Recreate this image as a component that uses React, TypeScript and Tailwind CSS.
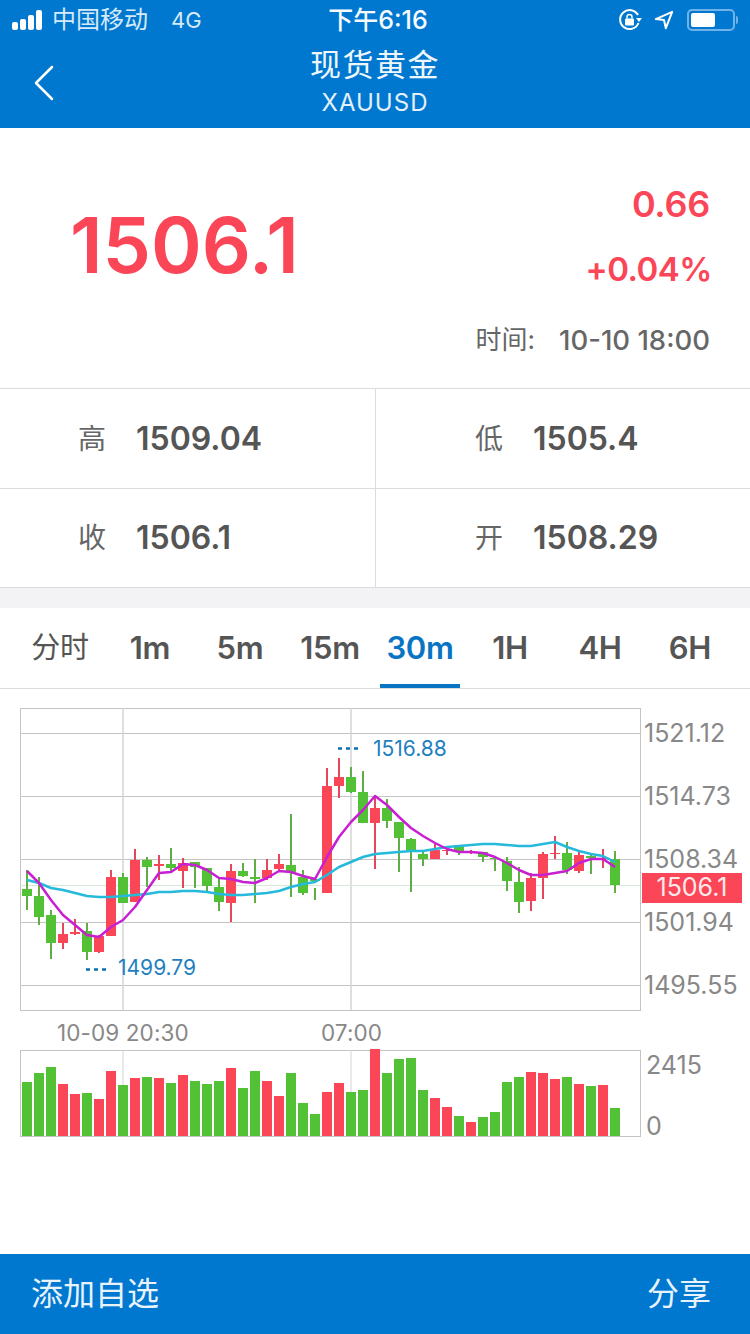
const CJK = 'Inter, "Noto Sans CJK SC", sans-serif';
type C = [number, number, number, number, number];
// [green=0/red=1, wickTop, wickBottom, bodyTop, bodyBottom]
const candles: C[] = [
  [0,870,910,889,896],[0,877,925,896,917],[0,910,959,915,943],[1,923,949,934,943],[1,919,935,932,934],
  [0,923,960,931,952],[1,935,953,936,952],[1,870,936,877,936],[0,873,903,877,903],[1,849,902,860,902],
  [0,857,887,860,867],[1,855,880,864,866],[0,848,873,864,868],[1,858,888,863,871],[0,862,888,862,867],
  [0,868,893,868,886],[0,878,911,887,902],[1,864,922,871,903],[0,863,877,871,876],[0,859,903,877,879],
  [1,859,880,870,878],[1,854,870,864,869],[0,814,897,865,872],[0,870,895,877,893],[0,888,900,879,881],
  [1,768,893,786,893],[1,758,798,777,786],[0,767,793,777,792],[0,771,823,792,823],[1,795,869,808,823],
  [0,799,828,808,821],[0,822,872,822,838],[0,838,892,839,852],[0,851,866,854,859],[1,844,859,850,859],
  [1,846,855,850,851],[0,847,855,847,852],[1,850,854,852,853],[0,852,862,852,857],[0,858,871,858,859],
  [0,857,891,861,881],[0,867,913,882,902],[1,873,911,878,901],[1,852,899,854,878],[1,836,859,853,854],
  [0,842,874,853,870],[1,851,873,855,871],[0,855,874,856,858],[1,849,868,858,859],[0,851,893,859,885],
];
const magenta = [871,883,900,915,925,935,937,927,920,907,890,873,872,864,865,870,878,879,882,883,878,871,872,876,879,857,837,822,810,796,805,817,828,836,843,849,852,852,853,857,863,870,875,875,873,871,863,859,859,867];
const cyan = [880,883,888,890,893,896,897,897,896,895,894,892,892,891,891,892,894,895,895,894,893,891,887,884,882,875,867,862,857,854,853,852,851,851,849,847,846,845,844,844,845,846,846,844,842,847,851,854,856,862];
const vols: [number, number][] = [
  [0,1082],[0,1073],[0,1067],[1,1084],[1,1094],[0,1093],[1,1099],[1,1071],[0,1085],[1,1078],
  [0,1077],[1,1078],[0,1083],[1,1075],[0,1081],[0,1084],[0,1081],[1,1068],[0,1088],[0,1071],
  [1,1081],[1,1096],[0,1073],[0,1103],[0,1114],[1,1092],[1,1083],[0,1092],[0,1090],[1,1049],
  [0,1073],[0,1059],[0,1058],[0,1090],[1,1098],[1,1107],[0,1116],[1,1122],[0,1117],[0,1112],
  [0,1082],[0,1077],[1,1072],[1,1073],[1,1079],[0,1077],[1,1084],[0,1086],[1,1085],[0,1108],
];
const RED = '#fb4658';
const GREEN = '#52c136';
const xAt = (i: number) => 27 + 12 * i;
const pts = (a: number[]) => a.map((y, i) => `${xAt(i)},${y}`).join(' ');

function Cell({ label, value, left }: { label: string; value: string; left?: boolean }) {
  return (
    <div className={`flex items-center ${left ? 'w-[376px] border-r border-[#dcdcdc] pl-[78px]' : 'w-[374px] pl-[99px]'}`}>
      <span className="w-[58px] text-[28px] text-[#666]">{label}</span>
      <span className="text-[32px] font-semibold text-[#555]">{value}</span>
    </div>
  );
}

const tabs = ['分时', '1m', '5m', '15m', '30m', '1H', '4H', '6H'];

export default function App() {
  return (
    <div className="flex h-[1334px] w-[750px] flex-col overflow-hidden bg-white" style={{ fontFamily: CJK }}>
      <header className="h-[128px] shrink-0 bg-[#0078d0] text-white">
        <div className="flex h-[40px] items-center justify-between pl-[12px] pr-[12px]">
          <div className="flex w-[266px] items-center">
            <div className="flex items-end gap-[2px]">
              <i className="h-[8px] w-[6px] rounded-[2px] bg-white" />
              <i className="h-[11px] w-[6px] rounded-[2px] bg-white" />
              <i className="h-[15px] w-[6px] rounded-[2px] bg-white" />
              <i className="h-[20px] w-[6px] rounded-[2px] bg-white" />
            </div>
            <span className="ml-[10px] text-[24px] leading-none text-[#d6eaf8]">中国移动</span>
            <span className="ml-[23px] text-[22px] leading-none text-[#d6eaf8]">4G</span>
          </div>
          <span className="text-[25px] leading-none font-medium text-[#f4fafe]">下午6:16</span>
          <div className="flex w-[260px] items-center justify-end">
            <svg width="24" height="24" viewBox="0 0 24 24" fill="none" stroke="white" strokeWidth="2">
              <path d="M20 7 A9.5 9.5 0 1 0 20.5 15" />
              <path d="M18 10 L24 10 L21 14 Z" fill="white" stroke="none" />
              <rect x="7" y="10.5" width="9" height="7" rx="1" fill="white" stroke="none" />
              <path d="M9 10.5 V9 a2.5 2.5 0 0 1 5 0 V10.5" strokeWidth="1.5" />
            </svg>
            <svg className="ml-[12px]" width="20" height="20" viewBox="0 0 22 22" fill="none" stroke="white" strokeWidth="2.2" strokeLinejoin="round">
              <path d="M20 2 L2 10 L11 11 L13 20 Z" />
            </svg>
            <div className="ml-[13px] flex items-center">
              <div className="flex h-[22px] w-[48px] items-center rounded-[5px] border-2 border-[#6fb3e8] p-[2px]">
                <div className="h-full w-[24px] rounded-[2px] bg-white" />
              </div>
              <div className="ml-[1px] h-[8px] w-[2px] rounded-r bg-[#6fb3e8]" />
            </div>
          </div>
        </div>
        <div className="relative flex h-[88px] flex-col items-center">
          <svg className="absolute left-[33px] top-[25px]" width="22" height="36" viewBox="0 0 22 36" fill="none" stroke="white" strokeWidth="2.5" strokeLinecap="round" strokeLinejoin="round">
            <path d="M19 2 L3 18 L19 34" />
          </svg>
          <span className="mt-[5px] text-[31px] leading-[40px] tracking-[1.5px] text-[#f0f7fc]">现货黄金</span>
          <span className="mt-[4px] text-[24px] leading-[28px] tracking-[1px] text-[#e3f0fa]">XAUUSD</span>
        </div>
      </header>

      <section className="flex h-[260px] shrink-0 justify-between pl-[70px] pr-[40px]">
        <div className="pt-[74px] text-[77px] leading-[86px] font-semibold text-[#fb4658]">1506.1</div>
        <div className="flex flex-col items-end">
          <div className="mt-[56px] text-[36px] leading-[40px] font-semibold tracking-[-0.3px] text-[#fb4658]">0.66</div>
          <div className="mt-[25px] -mr-[2px] text-[33px] leading-[40px] font-semibold tracking-[-0.5px] text-[#fb4658]">+0.04%</div>
          <div className="mt-[36px] flex items-center leading-[30px] text-[#666]">
            <span className="mr-[24px] text-[26px]">时间:</span>
            <span className="text-[27.5px] font-medium">10-10 18:00</span>
          </div>
        </div>
      </section>

      <section className="h-[220px] shrink-0">
        <div className="flex h-[101px] border-y border-[#dcdcdc]"><Cell label="高" value="1509.04" left /><Cell label="低" value="1505.4" /></div>
        <div className="flex h-[99px] border-b border-[#dcdcdc]"><Cell label="收" value="1506.1" left /><Cell label="开" value="1508.29" /></div>
        <div className="h-[20px] bg-[#f3f3f5]" />
      </section>

      <nav className="flex h-[81px] shrink-0 items-center border-b border-[#dcdcdc] px-[15px]">
        {tabs.map((t) => {
          const on = t === '30m';
          return (
            <div key={t} className={`relative flex h-full w-[90px] items-center justify-center text-[31px] font-semibold tracking-[-0.3px] ${on ? 'text-[#0a74c4]' : 'text-[#555]'}`}>
              <span className={t === '分时' ? 'text-[29px] font-normal' : ''}>{t}</span>
              {on && <div className="absolute bottom-0 left-[5px] h-[4px] w-[80px] bg-[#0a74c4]" />}
            </div>
          );
        })}
      </nav>

      <section className="relative flex-1 pt-[19px] text-[#888]">
        {/* candlestick chart */}
        <div className="flex h-[303px]">
          <svg className="ml-[20px] block shrink-0" width="622" height="303" viewBox="20 708 622 303">
            <rect x="20.5" y="708.5" width="620" height="302" fill="white" stroke="#c4c4c4" />
            {[733, 796, 859, 922, 985].map((y) => (
              <line key={y} x1="20" x2="640" y1={y + 0.5} y2={y + 0.5} stroke="#c4c4c4" />
            ))}
            {[123, 351].map((x) => (
              <line key={x} x1={x} x2={x} y1="708" y2="1010" stroke="#d4d4d4" strokeWidth="1.5" />
            ))}
            <line x1="20" x2="640" y1="885.5" y2="885.5" stroke="#d8e8d8" />
            {candles.map(([r, wt, wb, bt, bb], i) => {
              const c = r ? RED : GREEN;
              const x = xAt(i);
              return (
                <g key={i}>
                  <line x1={x} x2={x} y1={wt} y2={wb} stroke={r ? '#e2475c' : '#5fae45'} strokeWidth="2" />
                  <rect x={x - 5} y={bt} width="10" height={Math.max(bb - bt, 1)} fill={c} />
                </g>
              );
            })}
            <polyline points={pts(cyan)} fill="none" stroke="#25b9dc" strokeWidth="2.5" strokeLinejoin="round" />
            <polyline points={pts(magenta)} fill="none" stroke="#c81fd2" strokeWidth="2.5" strokeLinejoin="round" />
            <path d="M86 969.5 H106" stroke="#0a6fb0" strokeWidth="2.5" strokeDasharray="4 4" />
            <path d="M338 748.5 H358" stroke="#0a6fb0" strokeWidth="2.5" strokeDasharray="4 4" />
          </svg>
          <div className="ml-[2px] -mt-[7px] flex h-[315px] flex-col text-[25px] leading-[30px] text-[#888]">
            {['1521.12', '1514.73', '1508.34', '1501.94', '1495.55'].map((v) => (
              <div key={v} className="flex h-[63px] shrink-0 items-center">{v}</div>
            ))}
          </div>
        </div>
        <div className="absolute left-[118px] top-[267px] text-[21px] leading-[24px] text-[#1f7fbf]">1499.79</div>
        <div className="absolute left-[373px] top-[48px] text-[21px] leading-[24px] text-[#1f7fbf]">1516.88</div>
        <div className="absolute left-[642px] top-[184px] flex h-[30px] w-[100px] items-center justify-center bg-[#fb4658] text-[25px] text-[#fdeaec]">1506.1</div>

        {/* time labels */}
        <div className="relative h-[38px]">
          <span className="absolute left-[57px] top-[9px] text-[22.5px] leading-[26px] tracking-[0.1px]">10-09 20:30</span>
          <span className="absolute left-[321px] top-[9px] text-[22.5px] leading-[26px] tracking-[0.1px]">07:00</span>
        </div>

        {/* volume chart */}
        <div className="flex">
          <svg className="ml-[20px] block shrink-0" width="622" height="88" viewBox="20 1049 622 88">
            <rect x="20.5" y="1050.5" width="620" height="86" fill="white" stroke="#c4c4c4" />
            {[123, 351].map((x) => (
              <line key={x} x1={x} x2={x} y1="1050" y2="1136" stroke="#d4d4d4" />
            ))}
            {vols.map(([r, top], i) => (
              <rect key={i} x={xAt(i) - 5} y={top} width="10" height={1136 - top} fill={r ? RED : GREEN} />
            ))}
          </svg>
          <div className="ml-[4px] flex h-[92px] flex-col justify-between pt-[1px] text-[25px] leading-[30px] text-[#888]">
            <div>2415</div>
            <div>0</div>
          </div>
        </div>
      </section>

      <footer className="flex h-[80px] shrink-0 items-center justify-between bg-[#0078d0] pl-[31px] pr-[39px] text-[32px] text-[#e8f3fb]">
        <span>添加自选</span>
        <span>分享</span>
      </footer>
    </div>
  );
}
